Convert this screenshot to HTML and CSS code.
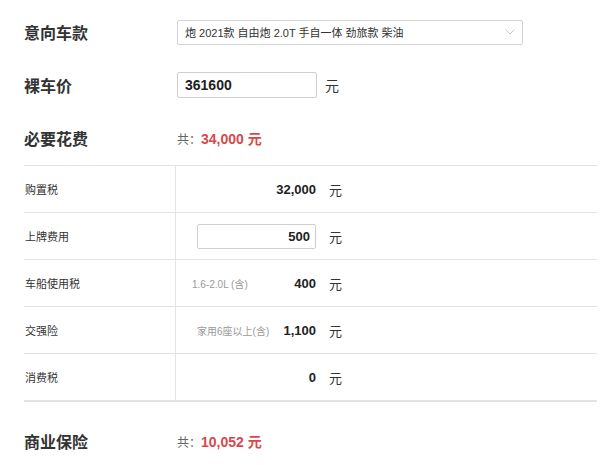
FILE: index.html
```html
<!DOCTYPE html>
<html lang="zh-CN">
<head>
    <meta charset="utf-8">
    <title>购车费用计算</title>
    <link rel="stylesheet" href="styles.css">
</head>
<body>
    <div class="calc">
        <div class="c_row">
            <h3 class="c_label">意向车款</h3>
            <div class="c_select">
                <span>炮 2021款 自由炮 2.0T 手自一体 劲旅款 柴油</span>
                <svg class="c_arrow" width="10" height="6" viewBox="0 0 10 6"><path d="M0.5 0.5 L5 5 L9.5 0.5" fill="none" stroke="#c8c8c8" stroke-width="1"/></svg>
            </div>
        </div>
        <div class="c_row">
            <h3 class="c_label">裸车价</h3>
            <input type="text" class="c_price" value="361600">
            <span class="c_unit_big">元</span>
        </div>
        <div class="c_row c_row_total">
            <h3 class="c_label">必要花费</h3>
            <span class="c_total_pre">共：</span><span class="c_total">34,000 元</span>
        </div>
        <div class="c_table">
            <div class="c_t_row">
                <div class="c_t_name">购置税</div>
                <div class="c_t_val">
                    <div class="c_t_box"><b>32,000</b></div>
                    <span class="c_t_unit">元</span>
                </div>
            </div>
            <div class="c_t_row">
                <div class="c_t_name">上牌费用</div>
                <div class="c_t_val">
                    <div class="c_t_box"><input type="text" class="c_t_input" value="500"></div>
                    <span class="c_t_unit">元</span>
                </div>
            </div>
            <div class="c_t_row">
                <div class="c_t_name">车船使用税</div>
                <div class="c_t_val">
                    <div class="c_t_box"><span class="c_t_note">1.6-2.0L (含)</span><b>400</b></div>
                    <span class="c_t_unit">元</span>
                </div>
            </div>
            <div class="c_t_row">
                <div class="c_t_name">交强险</div>
                <div class="c_t_val">
                    <div class="c_t_box"><span class="c_t_note c_t_note_in">家用6座以上(含)</span><b>1,100</b></div>
                    <span class="c_t_unit">元</span>
                </div>
            </div>
            <div class="c_t_row">
                <div class="c_t_name">消费税</div>
                <div class="c_t_val">
                    <div class="c_t_box"><b>0</b></div>
                    <span class="c_t_unit">元</span>
                </div>
            </div>
        </div>
        <div class="c_row c_row_last">
            <h3 class="c_label">商业保险</h3>
            <span class="c_total_pre">共：</span><span class="c_total">10,052 元</span>
        </div>
    </div>
</body>
</html>
```

FILE: styles.css
```css
body {padding: 0px; margin: 0px; background: #fff; color: #333; font-family: "Liberation Sans", "Noto Sans CJK SC", sans-serif;}
h3 {margin: 0px;}
input {font-family: inherit; outline: none;}
/* =============================================================== */
.calc {
    padding: 19px 3px 0px 24px;
}
.c_row {
    display: flex;
    align-items: center;
    height: 26px;
    margin-bottom: 27px;
}
.c_row_total {
    margin-bottom: 14px;
}
.c_row_last {
    margin: 26px 0px 0px;
}
.c_label {
    width: 153px;
    flex-shrink: 0;
    font-size: 16px;
    font-weight: 700;
    color: #333;
}
.c_select {
    display: flex;
    align-items: center;
    justify-content: space-between;
    width: 346px;
    height: 25px;
    box-sizing: border-box;
    border: 1px solid #d2d2d2;
    border-radius: 2px;
    padding: 0px 7px 0px 7px;
    font-size: 11px;
    color: #333;
}
.c_price {
    width: 140px;
    height: 26px;
    box-sizing: border-box;
    border: 1px solid #cfcfcf;
    border-radius: 2px;
    padding-left: 7px;
    font-size: 14px;
    font-weight: 700;
    color: #222;
}
.c_unit_big {
    margin-left: 8px;
    font-size: 14px;
}
.c_total_pre {
    font-size: 12px;
    color: #666;
}
.c_total {
    font-size: 14px;
    font-weight: 700;
    color: #d9474c;
}
/* ======================================== */
.c_table {
    border-bottom: 2px solid #e2e2e2;
}
.c_t_row {
    display: flex;
    height: 46px;
    border-top: 1px solid #e3e3e3;
}
.c_t_name {
    display: flex;
    align-items: center;
    width: 152px;
    padding-left: 1px;
    box-sizing: border-box;
    border-right: 1px solid #e3e3e3;
    font-size: 11px;
    color: #333;
}
.c_t_val {
    display: flex;
    align-items: center;
    padding-left: 16px;
}
.c_t_box {
    display: flex;
    align-items: center;
    justify-content: space-between;
    width: 124px;
}
.c_t_box b {
    margin-left: auto;
    font-size: 13px;
    color: #222;
}
.c_t_input {
    width: 119px;
    height: 25px;
    margin-left: auto;
    box-sizing: border-box;
    border: 1px solid #cfcfcf;
    border-radius: 2px;
    padding-right: 5px;
    text-align: right;
    font-size: 13px;
    font-weight: 700;
    color: #222;
}
.c_t_note {
    font-size: 10px;
    color: #999;
}
.c_t_note_in {
    margin-left: 5px;
}
.c_t_unit {
    margin-left: 13px;
    font-size: 13px;
    color: #333;
}
```
